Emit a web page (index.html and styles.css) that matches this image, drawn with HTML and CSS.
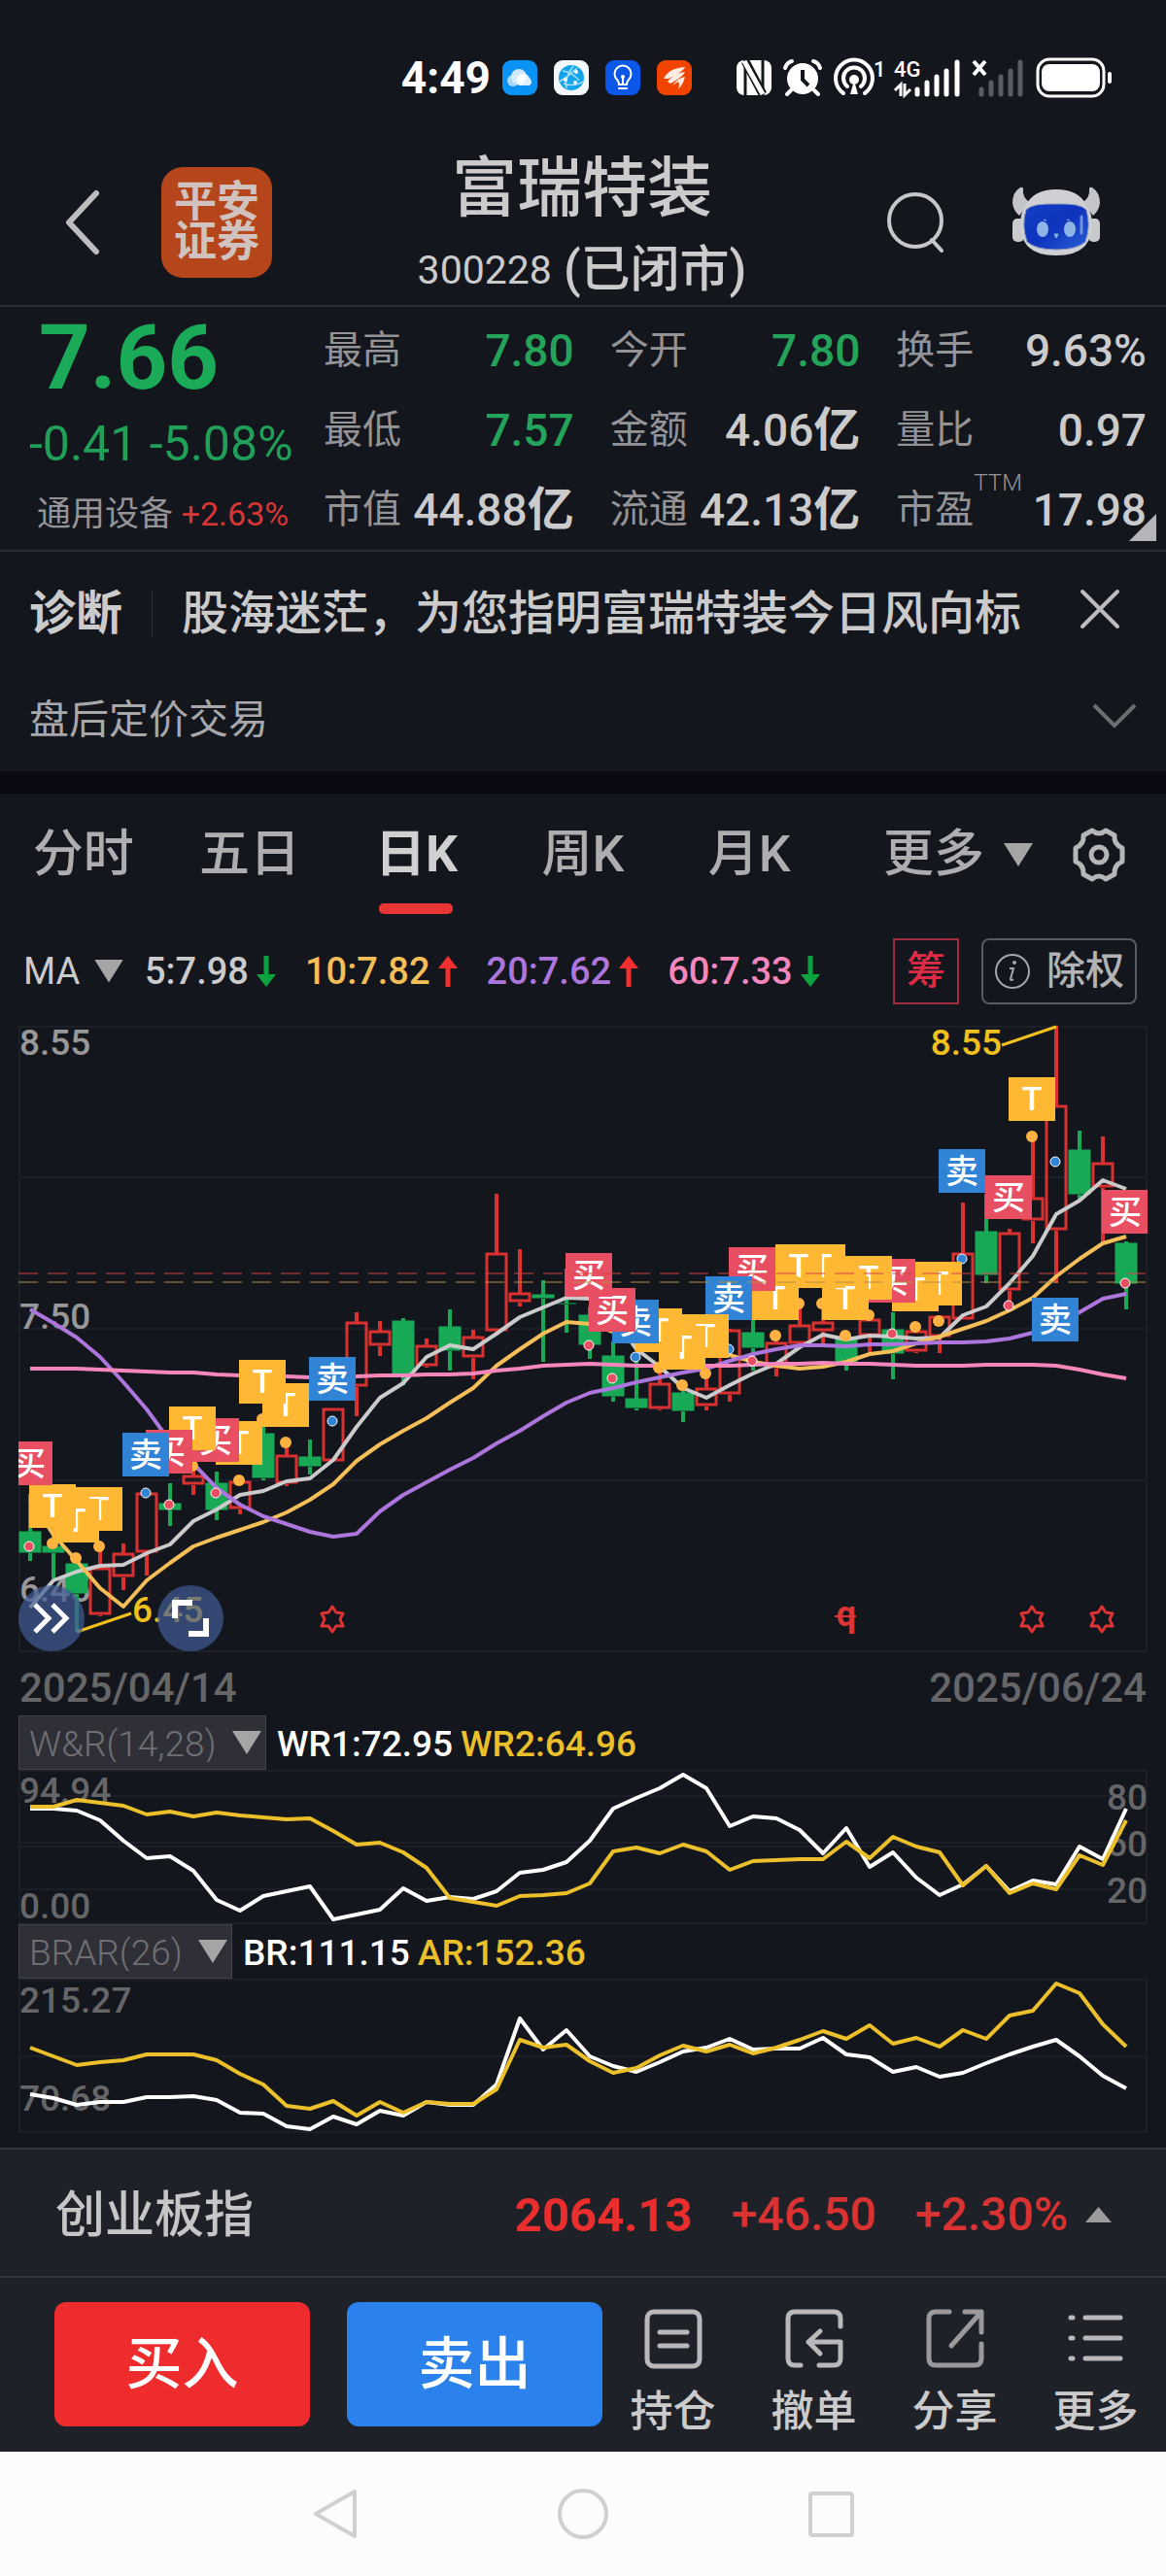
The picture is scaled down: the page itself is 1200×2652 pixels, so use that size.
FILE: index.html
```html
<!DOCTYPE html>
<html lang="zh-CN">
<head>
<meta charset="utf-8">
<meta name="viewport" content="width=device-width, initial-scale=1">
<title>富瑞特装 300228</title>
<link rel="stylesheet" href="styles.css">
</head>
<body>
<div class="status-bar">
  <span class="clock">4:49</span>
  <div class="status-apps">
    <svg class="app-icon" viewBox="0 0 36 36"><rect width="36" height="36" rx="9" fill="#0a93f5"/><circle cx="17" cy="17" r="8" fill="#fff" opacity=".8"/><circle cx="11" cy="21" r="6" fill="#d5ecff" opacity=".8"/><path d="M17 26a7 7 0 1 1 11-8q4 5 0 8z" fill="#fff" opacity=".85"/></svg>
    <svg class="app-icon" viewBox="0 0 36 36"><rect width="36" height="36" rx="9" fill="#f4f8fa"/><circle cx="18" cy="18" r="13" fill="#12a5ea"/><path d="M9 11q10 1 17 10M13 29q-3-9 7-23M24 8q-8 8-18 14M30 22q-9 6-20 2" fill="none" stroke="#a7e0fa" stroke-width="1.5"/><circle cx="23" cy="12" r="2" fill="#fff"/><circle cx="12" cy="20" r="2" fill="#fff"/><circle cx="22" cy="23" r="2" fill="#fff"/></svg>
    <svg class="app-icon" viewBox="0 0 36 36"><rect width="36" height="36" rx="9" fill="#0b57e8"/><path d="M14 25q0-3-2-5a8.500 8.500 0 1 1 12 0q-2 2-2 5zM14 29h8M18 25v-7" fill="none" stroke="#fff" stroke-width="2" stroke-linecap="round"/><circle cx="18" cy="17" r="2" fill="#fff"/></svg>
    <svg class="app-icon" viewBox="0 0 36 36"><rect width="36" height="36" rx="9" fill="#f24400"/><path d="M7 19Q12 8 29 7Q28 11 12 19zM11 22Q18 13 29 12Q27 17 14 24zM16 26Q22 18 29 17Q27 25 22 30Q24 25 22 22z" fill="#ffece4"/></svg>
  </div>
  <div class="status-system">
    <svg width="36" height="36" viewBox="0 0 36 36"><rect width="36" height="36" rx="8" fill="#fff"/><path d="M9 0v36M27 0v36" stroke="#14161e" stroke-width="3"/><path d="M9 1L27 35" stroke="#14161e" stroke-width="9"/><path d="M8 1L27 35" stroke="#fff" stroke-width="5"/></svg>
    <svg width="40" height="38" viewBox="0 0 40 38"><circle cx="20" cy="20" r="16" fill="#fff"/><path d="M20 11v10l6 6" fill="none" stroke="#14161e" stroke-width="4"/><path d="M2 9q2-6 7-7M38 9q-2-6-7-7M8 32l-4 4M32 32l4 4" fill="none" stroke="#fff" stroke-width="4" stroke-linecap="round"/></svg>
    <svg width="54" height="38" viewBox="0 0 54 38"><path d="M10 35a19 19 0 1 1 22 0M14 28a11 11 0 1 1 14 0" fill="none" stroke="#fff" stroke-width="4" stroke-linecap="round"/><path d="M17 36l4-14l4 14z" fill="#fff"/><circle cx="21" cy="21" r="5" fill="#fff"/><text class="status-mini" x="41" y="18">1</text></svg>
    <svg width="68" height="38" viewBox="0 0 68 38"><text class="status-mini" x="0" y="18">4G</text><path d="M7 38V26l-6 6M11 25v12l6-6" fill="none" stroke="#fff" stroke-width="3"/><path d="M24 31v5M34 24v12M44 18v18M54 12v24M65 3v33" stroke="#fff" stroke-width="5" stroke-linecap="round"/></svg>
    <svg width="54" height="38" viewBox="0 0 54 38"><path d="M2 2l12 14M14 2L2 16" stroke="#fff" stroke-width="4"/><path d="M10 31v5M20 24v12M30 18v18M40 12v24M50 3v33" stroke="#5a5c63" stroke-width="5" stroke-linecap="round"/></svg>
    <svg width="80" height="42" viewBox="0 0 80 42"><rect x="2" y="2" width="68" height="38" rx="12" fill="none" stroke="#fff" stroke-width="3"/><rect x="6" y="7" width="60" height="28" rx="8" fill="#fff"/><rect x="74" y="15" width="4" height="12" rx="2" fill="#fff"/></svg>
  </div>
</div>

<header class="app-header">
  <div class="header-left">
    <button class="icon-button" aria-label="返回"><svg width="38" height="68" viewBox="0 0 38 68"><path d="M33 4L5 34L33 64" fill="none" stroke="#bdbdbf" stroke-width="6" stroke-linecap="round" stroke-linejoin="round"/></svg></button>
    <a class="broker-logo" href="#broker"><span>平安</span><span>证券</span></a>
  </div>
  <div class="header-title">
    <h1>富瑞特装</h1>
    <p><span class="stock-code">300228</span><span>(已闭市)</span></p>
  </div>
  <div class="header-right">
    <button class="icon-button" aria-label="搜索"><svg width="60" height="64" viewBox="0 0 60 64"><circle cx="30" cy="30" r="27" fill="none" stroke="#c6c7ca" stroke-width="4"/><path d="M47 50l10 11" stroke="#c6c7ca" stroke-width="4" stroke-linecap="round"/></svg></button>
    <button class="icon-button" aria-label="智能助手"><svg width="90" height="74" viewBox="0 0 90 74">
      <defs><linearGradient id="visor" x1="0" y1="0" x2="1" y2="1"><stop offset="0" stop-color="#123fc4"/><stop offset=".5" stop-color="#0f33bd"/><stop offset="1" stop-color="#2b5fd6"/></linearGradient></defs>
      <path d="M8 1Q0 6 0 17Q1 25 7 30L18 16Q10 12 11 2Q10 0 8 1z" fill="#c3c5ca"/><path d="M82 1Q90 6 90 17Q89 25 83 30L72 16Q80 12 79 2Q80 0 82 1z" fill="#c3c5ca"/>
      <rect x="0" y="33" width="12" height="24" rx="5" fill="#c9cacd"/><rect x="78" y="33" width="12" height="24" rx="5" fill="#c9cacd"/>
      <path d="M45 3Q68 3 76 19Q84 30 81 46Q78 71 45 71Q12 71 9 46Q6 30 14 19Q22 3 45 3z" fill="#cfd0d3"/>
      <path d="M45 18Q70 17 76 24Q81 40 75 57Q66 65 45 65T15 57Q9 40 14 24Q20 17 45 18z" fill="url(#visor)" stroke="#8f9cc0" stroke-width="1"/>
      <ellipse cx="31" cy="44" rx="6" ry="8" fill="#8eb4e6"/><ellipse cx="59" cy="44" rx="6" ry="8" fill="#8eb4e6"/><path d="M32 34l3 1M56 34l3 1M43 49h4l-2 4z" stroke="#8eb4e6" stroke-width="1" fill="#8eb4e6"/><path d="M71 31v17" stroke="#6f8fe0" stroke-width="3" stroke-linecap="round"/>
    </svg></button>
  </div>
</header>

<section class="quote">
  <div class="quote-price">
    <strong class="price">7.66</strong>
    <span class="change">-0.41 -5.08%</span>
    <span class="sector">通用设备 <b>+2.63%</b></span>
  </div>
  <dl class="stats">
    <div><dt>最高</dt><dd class="down">7.80</dd></div>
    <div><dt>今开</dt><dd class="down">7.80</dd></div>
    <div><dt>换手</dt><dd>9.63%</dd></div>
    <div><dt>最低</dt><dd class="down">7.57</dd></div>
    <div><dt>金额</dt><dd>4.06<i>亿</i></dd></div>
    <div><dt>量比</dt><dd>0.97</dd></div>
    <div><dt>市值</dt><dd>44.88<i>亿</i></dd></div>
    <div><dt>流通</dt><dd>42.13<i>亿</i></dd></div>
    <div><dt>市盈<sup>TTM</sup></dt><dd>17.98</dd></div>
  </dl>
  <span class="corner"></span>
</section>

<section class="notices">
  <div class="diagnosis">
    <strong>诊断</strong>
    <a href="#diagnosis">股海迷茫，为您指明富瑞特装今日风向标</a>
    <button class="icon-button" aria-label="关闭"><svg width="44" height="44" viewBox="0 0 44 44"><path d="M4 4l36 36M40 4L4 40" stroke="#bdbdbf" stroke-width="4" stroke-linecap="round"/></svg></button>
  </div>
  <div class="after-hours">
    <span>盘后定价交易</span>
    <button class="icon-button" aria-label="展开"><svg width="46" height="28" viewBox="0 0 46 28"><path d="M2 3l21 21L44 3" fill="none" stroke="#6d6e72" stroke-width="4"/></svg></button>
  </div>
</section>

<nav class="tabs">
  <div class="periods">
    <button>分时</button>
    <button>五日</button>
    <button class="active">日K</button>
    <button>周K</button>
    <button>月K</button>
  </div>
  <button class="more-tab">更多<span class="caret"></span></button>
  <button class="icon-button" aria-label="设置"><svg width="56" height="56" viewBox="0 0 56 56" fill="none" stroke="#b5b6b8" stroke-width="5" stroke-linejoin="round"><path d="M21 3Q28 9 35 3L44 8Q43 17 52 21V35Q43 39 44 48L35 53Q28 47 21 53L12 48Q13 39 4 35V21Q13 17 12 8z"/><circle cx="28" cy="28" r="8"/></svg></button>
</nav>

<section class="averages">
  <label class="ma-select"><select aria-label="主图指标"><option>MA</option></select><span class="caret"></span></label>
  <ul>
    <li class="ma5">5:7.98<svg width="20" height="32" viewBox="0 0 20 32"><path d="M10 0v22" stroke="#0aa33f" stroke-width="5"/><path d="M0 19h20L10 32z" fill="#0aa33f"/></svg></li>
    <li class="ma10">10:7.82<svg width="20" height="32" viewBox="0 0 20 32"><path d="M10 32V10" stroke="#f3302f" stroke-width="5"/><path d="M0 13h20L10 0z" fill="#f3302f"/></svg></li>
    <li class="ma20">20:7.62<svg width="20" height="32" viewBox="0 0 20 32"><path d="M10 32V10" stroke="#f3302f" stroke-width="5"/><path d="M0 13h20L10 0z" fill="#f3302f"/></svg></li>
    <li class="ma60">60:7.33<svg width="20" height="32" viewBox="0 0 20 32"><path d="M10 0v22" stroke="#0aa33f" stroke-width="5"/><path d="M0 19h20L10 32z" fill="#0aa33f"/></svg></li>
  </ul>
  <div class="chart-options">
    <button class="chips">筹</button>
    <button class="rights"><svg width="38" height="38" viewBox="0 0 38 38"><circle cx="19" cy="19" r="17" fill="none" stroke="#a5a6a9" stroke-width="2"/><circle cx="21" cy="10" r="2" fill="#a5a6a9"/><path d="M16 16h4l-3 11q0 2 3 0" fill="none" stroke="#a5a6a9" stroke-width="2"/></svg>除权</button>
  </div>
</section>

<section class="chart-area">
  <svg id="kline" class="chart" viewBox="0 0 1200 644"></svg>
  <div class="chart-tools">
    <button aria-label="展开面板"><svg width="40" height="32" viewBox="0 0 40 32"><path d="M3 2l14 14L3 30M21 2l14 14l-14 14" fill="none" stroke="#fff" stroke-width="5"/></svg></button>
    <button aria-label="全屏"><svg width="40" height="40" viewBox="0 0 40 40"><path d="M4 20V4h18M36 20v16H18" fill="none" stroke="#fff" stroke-width="6"/></svg></button>
  </div>
</section>
<div class="dates"><time>2025/04/14</time><time>2025/06/24</time></div>

<section class="indicator">
  <div class="indicator-head">
    <label class="indicator-select"><select aria-label="指标一"><option>W&amp;R(14,28)</option></select><span class="caret"></span></label>
    <span class="first">WR1:72.95</span><span class="second">WR2:64.96</span>
  </div>
  <svg id="wr" class="chart" viewBox="0 0 1200 159"></svg>
</section>
<section class="indicator">
  <div class="indicator-head">
    <label class="indicator-select"><select aria-label="指标二"><option>BRAR(26)</option></select><span class="caret"></span></label>
    <span class="first">BR:111.15</span><span class="second">AR:152.36</span>
  </div>
  <svg id="brar" class="chart" viewBox="0 0 1200 159"></svg>
</section>

<footer class="footer">
  <div class="index-row">
    <span class="index-name">创业板指</span>
    <strong>2064.13</strong><span>+46.50</span><span>+2.30%</span><i class="caret-up"></i>
  </div>
  <div class="actions">
    <button class="trade buy">买入</button>
    <button class="trade sell">卖出</button>
    <a href="#positions"><svg width="60" height="62" viewBox="0 0 60 62"><rect x="3" y="3" width="54" height="56" rx="7"/><path d="M16 24h28M16 38h28"/></svg>持仓</a>
    <a href="#cancel"><svg width="60" height="62" viewBox="0 0 60 62"><path d="M57 18V10Q57 3 50 3H10Q3 3 3 10V51Q3 58 10 58H16M35 58H50Q57 58 57 51V34H24M36 23L24 34L36 46"/></svg>撤单</a>
    <a href="#share"><svg class="dim" width="60" height="62" viewBox="0 0 60 62"><path d="M24 3H10Q3 3 3 10V51Q3 58 10 58H50Q57 58 57 51V36M40 3H57V24M57 3L26 38"/></svg>分享</a>
    <a href="#more"><svg width="60" height="62" viewBox="0 0 60 62"><path d="M19 9h36M19 30h36M19 51h36M4 9h2M4 30h2M4 51h2"/></svg>更多</a>
  </div>
</footer>

<nav class="system-nav">
  <button class="icon-button" aria-label="后退"><svg width="52" height="56" viewBox="0 0 52 56"><path d="M46 5V51L6 28z"/></svg></button>
  <button class="icon-button" aria-label="主页"><svg width="52" height="56" viewBox="0 0 52 56"><circle cx="26" cy="28" r="24"/></svg></button>
  <button class="icon-button" aria-label="最近任务"><svg width="52" height="56" viewBox="0 0 52 56"><rect x="5" y="7" width="43" height="43" rx="2"/></svg></button>
</nav>
<script src="charts.js"></script>
</body>
</html>
```
FILE: styles.css
```css
* { box-sizing: border-box; }
body {
  margin: 0;
  background: #14161e;
  color: #cbcbcc;
  font-family: Roboto, "Noto Sans CJK SC", sans-serif;
  font-size: 40px;
  line-height: 1;
}
h1, p, ul, dl, dd { margin: 0; padding: 0; }
ul { list-style: none; }
i { font-style: normal; }
a { color: inherit; text-decoration: none; }
svg { display: block; flex: none; overflow: visible; }
button, select {
  margin: 0;
  padding: 0;
  border: 0;
  background: none;
  color: inherit;
  font: inherit;
  white-space: nowrap;
}
select { appearance: none; }
.caret {
  width: 30px;
  height: 24px;
  background: #a5a5a6;
  clip-path: polygon(0 0, 100% 0, 50% 100%);
}

/* status bar */
.status-bar {
  display: flex;
  align-items: center;
  height: 140px;
  padding: 20px 54px 0 0;
  color: #fff;
}
.clock { margin-left: auto; font-size: 46px; font-weight: 700; }
.status-apps { display: flex; gap: 17px; margin-left: 12px; }
.app-icon { width: 36px; height: 36px; }
.status-system { display: flex; align-items: center; gap: 12px; margin-left: 46px; }
.status-system svg:nth-child(3) { margin-right: -4px; }
.status-mini { fill: #fff; font-size: 22px; font-weight: 500; }

/* header */
.app-header {
  display: grid;
  grid-template-columns: 1fr auto 1fr;
  align-items: center;
  height: 176px;
  padding: 0 68px 0 66px;
  border-bottom: 2px solid #2a2c34;
}
.header-left { display: flex; align-items: center; gap: 62px; }
.header-right { display: flex; align-items: center; justify-content: flex-end; gap: 70px; }
.broker-logo {
  display: flex;
  flex-direction: column;
  align-items: center;
  justify-content: center;
  width: 114px;
  height: 114px;
  border-radius: 22px;
  background: #b5451b;
  color: #d0c3bf;
  font-size: 44px;
  line-height: 41px;
  font-weight: 700;
}
.header-title { display: flex; flex-direction: column; align-items: center; padding-top: 10px; }
.header-title h1 { font-size: 67px; line-height: 88px; font-weight: 500; }
.header-title p { display: flex; align-items: center; gap: 12px; font-size: 51px; line-height: 80px; font-weight: 500; }
.header-title .stock-code { font-size: 41px; font-weight: 400; }

/* quote */
.quote { position: relative; display: flex; height: 252px; border-bottom: 2px solid #2a2c34; }
.quote-price { flex: 0 0 28%; display: flex; flex-direction: column; white-space: nowrap; }
.price { padding-left: 40px; color: #1aaa58; font-size: 92px; line-height: 106px; }
.change { padding-left: 30px; color: #1f9f57; font-size: 50px; line-height: 70px; }
.sector { padding-left: 38px; color: #949496; font-size: 35px; line-height: 74px; }
.sector b { color: #d93535; font-weight: 400; font-size: 34px; }
.stats {
  flex: 1;
  display: grid;
  grid-template-columns: repeat(3, 1fr);
  grid-auto-rows: 82px;
  column-gap: 40px;
  padding: 4px 20px 0 0;
  white-space: nowrap;
}
.stats div { display: flex; align-items: center; justify-content: space-between; }
.stats dt { position: relative; margin-left: -3px; color: #949496; }
.stats dd { display: flex; align-items: center; font-size: 46px; font-weight: 500; }
.stats dd i { font-size: 48px; font-weight: 700; }
.stats .down { color: #24a45b; }
.stats sup { position: absolute; left: 80px; top: -20px; font-size: 24px; line-height: 24px; font-weight: 300; }
.corner {
  position: absolute;
  right: 10px;
  bottom: 9px;
  width: 28px;
  height: 28px;
  background: #b5b5b7;
  clip-path: polygon(100% 0, 100% 100%, 0 100%);
}

/* notices */
.notices { padding: 0 30px 8px; border-bottom: 23px solid #0a0a14; }
.diagnosis, .after-hours { display: flex; align-items: center; }
.diagnosis { height: 128px; font-size: 48px; }
.diagnosis a { flex: 1; margin-left: 30px; padding-left: 30px; border-left: 1px solid #2f3138; font-weight: 500; }
.diagnosis .icon-button { margin: 0 16px 10px 0; }
.after-hours { justify-content: space-between; height: 90px; color: #a8a8aa; font-size: 41px; }
.after-hours .icon-button { margin-bottom: 8px; }

/* period tabs */
.tabs { display: flex; align-items: center; height: 126px; padding-right: 41px; color: #aeaeb0; font-size: 52px; font-weight: 500; }
.periods { flex: 1; display: flex; height: 100%; }
.periods button { position: relative; flex: 1 1 0; }
.periods .active { color: #d0d0d1; font-weight: 700; }
.periods .active::after {
  content: "";
  position: absolute;
  left: 50%;
  bottom: 2px;
  width: 76px;
  height: 11px;
  margin-left: -38px;
  border-radius: 5px;
  background: #e93533;
}
.more-tab { display: flex; align-items: center; gap: 20px; margin: 0 40px 0 52px; }

/* moving averages */
.averages { display: flex; align-items: center; height: 113px; padding: 0 30px 0 24px; font-size: 38px; white-space: nowrap; }
.ma-select { display: flex; align-items: center; gap: 14px; }
.averages ul { display: flex; gap: 30px; margin-left: 22px; }
.averages li { display: flex; align-items: center; gap: 8px; font-weight: 500; }
.ma10 { color: #f4be58; }
.ma20 { color: #ad76dc; }
.ma60 { color: #f587bd; }
.chart-options { display: flex; gap: 23px; margin-left: auto; font-size: 40px; font-weight: 500; }
.chart-options button { display: flex; align-items: center; justify-content: center; height: 68px; }
.chart-options .chips { width: 68px; border: 2px solid #a02c40; color: #df2c46; }
.chart-options .rights { gap: 16px; width: 160px; border: 2px solid #5a5b60; border-radius: 8px; color: #b3b3b5; }

/* charts */
.chart-area { position: relative; }
.chart { width: 100%; height: auto; }
.chart-tools { position: absolute; left: 19px; bottom: 0; display: flex; gap: 75px; }
.chart-tools button {
  display: flex;
  align-items: center;
  justify-content: center;
  width: 68px;
  height: 68px;
  border-radius: 50%;
  background: rgba(65, 92, 150, .7);
}
.grid-line { stroke: #1d1f28; stroke-width: 2; fill: none; }
.up { fill: none; stroke: #d93030; }
.fall { fill: #18a957; stroke: #18a957; }
.candle-wick { stroke-width: 4; }
.candle-body { stroke-width: 3; }
.series { fill: none; stroke-width: 4; stroke-linejoin: round; }
.marker-text { fill: #fff; font-size: 34px; font-weight: 500; text-anchor: middle; }
.axis { fill: #989899; font-size: 37px; font-weight: 500; }
.axis-dim { fill: #666668; font-size: 37px; font-weight: 500; }
.extreme { fill: #f0c01e; font-size: 37px; font-weight: 500; }
.event-mark { fill: #df3434; font-size: 36px; font-weight: 700; text-anchor: middle; }
.end { text-anchor: end; }
.dates { display: flex; justify-content: space-between; height: 66px; padding: 17px 20px 0; color: #666668; font-size: 42px; font-weight: 500; }

.indicator-head { display: flex; align-items: center; height: 56px; padding-left: 19px; font-size: 37px; font-weight: 500; white-space: nowrap; }
.indicator-head > span { padding-top: 3px; }
.indicator-select {
  display: flex;
  align-items: center;
  gap: 16px;
  height: 56px;
  padding: 0 4px 0 10px;
  border: 1px solid #44444f;
  background: #2f2f38;
  color: #707073;
  font-weight: 300;
}
.indicator-select select { padding-top: 3px; }
.indicator-head .first { margin-left: 11px; color: #fff; }
.indicator-head .second { margin-left: 8px; color: #ecc02a; }

/* footer */
.footer { margin-top: 15px; background: #1f2128; }
.index-row {
  display: flex;
  align-items: center;
  height: 132px;
  padding: 4px 56px 0 57px;
  border-top: 2px solid #353740;
  color: #d93232;
  font-size: 48px;
  font-weight: 500;
}
.index-row .index-name { margin-right: auto; color: #c6c6c7; font-size: 51px; }
.index-row strong { color: #ea2e2e; font-size: 49px; }
.index-row span + strong ~ span { margin-left: 40px; }
.caret-up { width: 27px; height: 16px; margin-left: 18px; background: #9c9c9d; clip-path: polygon(50% 0, 100% 100%, 0 100%); }
.actions { display: flex; height: 181px; padding: 25px 0 0 56px; border-top: 2px solid #353740; }
.trade { flex: 0 0 263px; height: 128px; margin-right: 38px; border-radius: 12px; color: #fff; font-size: 58px; font-weight: 500; }
.buy { background: #ee2c2d; }
.sell { margin-right: 0; background: #2b82ec; }
.actions a { flex: 1; display: flex; flex-direction: column; align-items: center; gap: 22px; padding-top: 7px; font-size: 44px; font-weight: 500; }
.actions svg { fill: none; stroke: #b9b9bb; stroke-width: 5; stroke-linecap: round; stroke-linejoin: round; }
.actions .dim { stroke: #9a9a9c; }

.system-nav { display: flex; justify-content: center; align-items: center; gap: 203px; height: 128px; background: #fcfcfc; }
.system-nav svg { fill: none; stroke: #d0d0d1; stroke-width: 4; stroke-linejoin: round; }
```
FILE: charts.js
```js
const STEP = 24;
const FIRST = 31;
const LEFT = 20;
const RIGHT = 1180;
const x = i => FIRST + i * STEP;

const line = (x1, y1, x2, y2, cls, extra = "") =>
  `<line x1="${x1}" y1="${y1}" x2="${x2}" y2="${y2}" class="${cls}" ${extra}/>`;
const series = (values, color) =>
  `<polyline class="series" stroke="${color}" points="${values.map((v, i) => `${x(i)},${v}`).join(" ")}"/>`;
const label = (px, py, text, cls) => `<text x="${px}" y="${py}" class="${cls}">${text}</text>`;
const frame = (h, rows) =>
  `<rect x="${LEFT}" y="1" width="${RIGHT - LEFT}" height="${h}" class="grid-line"/>` +
  rows.map(y => line(LEFT, y, RIGHT, y, "grid-line")).join("");

// [direction, high, body top, body bottom, low]
const candles = [
  ["f",482,521,543,551],["f",515,536,543,569],["f",551,554,585,624],["u",531,558,607,608],
  ["u",533,543,568,581],["u",478,481,543,566],["f",471,492,499,515],["u",455,463,473,483],
  ["f",459,471,499,509],["u",465,469,498,503],["f",412,420,466,468],["u",430,442,472,474],
  ["f",426,444,454,462],["u",394,394,449,449],["u",295,305,372,402],["u",304,314,330,340],
  ["f",301,304,359,370],["u",322,329,351,352],["f",292,310,335,355],["u",313,320,342,364],
  ["u",173,234,315,315],["u",230,275,285,289],["f",262,277,281,346],["f",250,286,287,316],
  ["f",289,298,329,343],["f",325,340,382,387],["f",344,384,394,396],["u",355,368,395,396],
  ["f",371,378,397,408],["u",358,373,392,396],["u",312,313,380,387],["f",301,316,332,355],
  ["u",320,326,353,361],["u",288,308,328,329],["u",288,305,315,329],["f",319,322,348,355],
  ["u",298,302,320,338],["f",295,313,338,364],["u",311,314,336,337],["u",298,299,321,337],
  ["u",182,234,303,303],["f",173,212,257,265],["u",209,213,273,286],["u",116,177,201,224],
  ["u",0,82,211,265],["f",108,128,174,179],["u",114,141,167,223],["f",222,224,266,292]
];

const ma5 = [599,571,562,556,555,543,534,510,498,483,479,469,466,447,413,383,368,341,329,333,317,300,290,280,281,298,333,351,373,383,370,358,348,331,318,323,319,320,322,321,298,289,265,237,194,180,159,168];
const ma10 = [487,524,551,579,598,571,553,536,527,519,511,501,488,472,448,431,417,404,388,373,350,333,317,305,307,315,326,331,334,336,339,346,350,353,351,346,338,335,327,320,312,304,293,280,258,240,224,217];
const ma20 = [292,306,321,341,367,395,428,451,476,493,505,513,521,526,523,500,483,470,457,445,430,417,402,388,378,373,367,362,357,353,345,338,333,329,329,330,328,328,327,326,326,325,322,316,309,295,281,276];
const ma60 = [353,353,353,354,355,356,357,357,359,360,361,361,362,362,361,360,360,359,359,358,355,353,350,349,348,349,350,350,350,350,350,349,348,348,347,348,348,349,350,350,350,349,349,349,350,354,359,363];

const candle = ([dir, high, top, bottom, low], i) => {
  const cls = dir === "u" ? "up" : "fall";
  const cx = x(i);
  const body = `<rect x="${cx - 10}" y="${top + 1}" width="20" height="${Math.max(bottom - top - 3, 0)}" class="${cls} candle-body"/>`;
  const wicks = line(cx, high, cx, top, cls + " candle-wick") + line(cx, bottom, cx, low, cls + " candle-wick");
  return wicks + (bottom - top < 2 ? line(cx - 10, top, cx + 10, top, cls) : body);
};

const markerColors = { 买: "#e94f63", 卖: "#3183d5", T: "#ffb833" };
const markers = [
  [0,428,"买"],[1,472,"T"],[2,487,"T"],[3,475,"T"],[5,419,"卖"],[6,416,"买"],[7,392,"T"],[8,404,"买"],
  [9,407,"T"],[10,344,"T"],[11,368,"T"],[13,341,"卖"],[24,234,"买"],[25,270,"买"],[26,282,"卖"],
  [27,291,"T"],[28,309,"T"],[29,297,"T"],[30,258,"卖"],[31,228,"买"],[32,258,"T"],[33,225,"T"],
  [34,225,"T"],[35,258,"T"],[36,237,"T"],[37,240,"买"],[38,249,"T"],[39,243,"T"],[40,127,"卖"],
  [42,154,"买"],[43,53,"T"],[44,280,"卖"],[47,169,"买"]
];
// Earlier signals are stacked over later ones.
const marker = ([i, y, kind]) => {
  const cx = x(i) - 1;
  return `<rect x="${cx - 24}" y="${y}" width="48" height="45" fill="${markerColors[kind]}"/>` +
    label(cx, y + (kind === "T" ? 34 : 35), kind, "marker-text");
};

const dotColors = { o: "#ffb141", r: "#e94f63", b: "#3183d5" };
const dots = [
  [0,536,"r"],[1,533,"o"],[2,548,"o"],[3,536,"o"],[5,481,"b"],[6,493,"r"],[7,453,"o"],[8,481,"r"],
  [9,468,"o"],[10,405,"o"],[11,429,"o"],[13,407,"b"],[24,329,"r"],[25,363,"r"],[26,341,"b"],
  [27,352,"o"],[28,370,"o"],[29,358,"o"],[30,333,"b"],[31,345,"r"],[32,319,"o"],[33,286,"o"],
  [34,286,"o"],[35,319,"o"],[36,298,"o"],[37,317,"r"],[38,310,"o"],[39,304,"o"],[40,240,"b"],
  [42,288,"r"],[43,114,"o"],[44,140,"b"],[47,265,"r"]
];
const dot = ([i, y, kind]) => kind === "o"
  ? `<circle cx="${x(i) - 1}" cy="${y}" r="6" fill="${dotColors.o}"/>`
  : `<circle cx="${x(i) - 1}" cy="${y}" r="5" fill="${dotColors[kind]}" stroke="#fff" stroke-width="1"/>`;

const star = i => {
  const points = Array.from({ length: 12 }, (_, k) => {
    const r = k % 2 ? 8 : 13;
    const a = k * Math.PI / 6;
    return `${Math.round(x(i) - 1 + r * Math.sin(a))},${Math.round(611 - r * Math.cos(a))}`;
  });
  return `<polygon points="${points.join(" ")}" fill="none" stroke="#df3434" stroke-width="3" stroke-linejoin="round"/>`;
};

document.getElementById("kline").innerHTML =
  '<clipPath id="plot"><rect x="19" y="0" width="1162" height="644"/></clipPath>' +
  frame(643, [156, 312, 468]) +
  label(20, 30, "8.55", "axis") + label(20, 312, "7.50", "axis") + label(20, 593, "6.45", "axis") +
  candles.map(candle).join("") +
  series(ma5, "#cbcbcc") + series(ma10, "#f4be58") + series(ma20, "#ad76dc") + series(ma60, "#f587bd") +
  dots.map(dot).join("") +
  `<g clip-path="url(#plot)">${[...markers].reverse().map(marker).join("")}</g>` +
  line(19, 255, RIGHT, 255, "", 'stroke="#d04444" stroke-width="1" stroke-dasharray="20 10"') +
  line(19, 264, RIGHT, 264, "", 'stroke="#b48c3c" stroke-width="1" stroke-dasharray="20 10"') +
  line(1031, 20, 1087, 1, "", 'stroke="#f0c01e" stroke-width="3"') +
  label(1031, 30, "8.55", "extreme end") +
  line(79, 624, 135, 605, "", 'stroke="#f0c01e" stroke-width="3"') +
  label(136, 614, "6.45", "extreme") +
  [13, 43, 46].map(star).join("") +
  label(871, 618, "q", "event-mark") + line(859, 608, 881, 608, "", 'stroke="#df3434" stroke-width="2"');

const wr1 = [40,40,42,52,73,91,89,104,134,145,130,125,120,154,149,144,122,135,131,133,125,106,103,95,73,40,29,19,5,19,58,48,50,62,86,60,100,85,111,129,118,99,125,114,118,79,92,40];
const wr2 = [38,38,31,34,37,46,43,48,44,47,49,51,50,63,77,75,85,101,132,136,140,130,129,127,117,84,80,86,77,84,103,94,93,92,92,74,91,69,79,85,119,99,127,117,123,88,98,52];
document.getElementById("wr").innerHTML =
  frame(157, [27, 75, 79, 123]) +
  label(20, 34, "94.94", "axis-dim") + label(20, 153, "0.00", "axis-dim") +
  label(1181, 41, "80", "axis-dim end") + label(1181, 89, "60", "axis-dim end") + label(1181, 137, "20", "axis-dim end") +
  series(wr1, "#fff") + series(wr2, "#ecc02a");

const br = [119,123,130,127,127,122,122,121,125,138,139,152,155,142,150,136,141,127,130,130,109,41,73,53,80,90,96,86,75,71,62,73,72,72,61,78,81,96,91,101,97,87,78,70,63,80,100,113];
const ar = [71,80,89,86,84,78,78,78,84,98,109,131,134,126,141,127,138,127,129,129,114,63,71,68,85,97,92,79,69,75,68,77,71,63,54,62,48,67,61,70,53,62,38,33,5,15,47,70];
document.getElementById("brar").innerHTML =
  frame(157, [80]) +
  label(20, 35, "215.27", "axis-dim") + label(20, 136, "70.68", "axis-dim") +
  series(br, "#fff") + series(ar, "#ecc02a");
```
